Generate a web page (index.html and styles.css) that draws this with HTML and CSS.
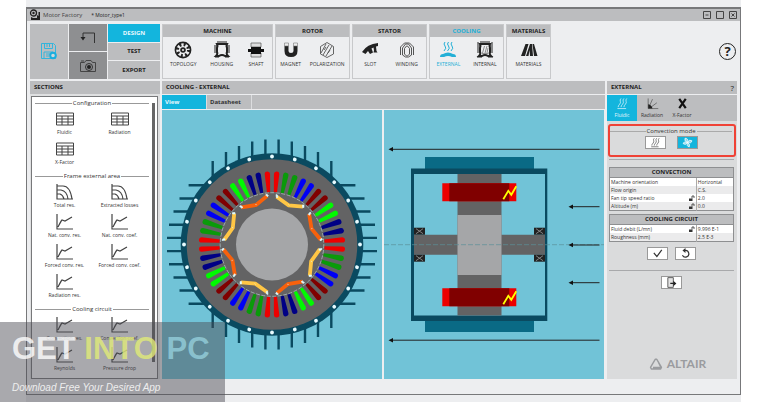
FILE: index.html
```
<!DOCTYPE html>
<html lang="en">
<head>
<meta charset="utf-8">
<title>Motor Factory</title>
<link rel="stylesheet" href="styles.css">
</head>
<body>
<svg class="defs" aria-hidden="true">
  <symbol id="i-table" viewBox="0 0 18 16"><path d="M.5 2h17v12H.5zM.5 5h17M.5 8h17M.5 11h17M6 5v9M12 5v9" fill="none" stroke="#444"/></symbol>
  <symbol id="i-map" viewBox="0 0 18 16"><path d="M1 0v15h16M1 2h6q7 0 9 13M1 6h4q6 1 7 9M1 10h3q3 1 4 5" fill="none" stroke="#444" stroke-width="1.2"/></symbol>
  <symbol id="i-curve" viewBox="0 0 18 16"><path d="M1 0v15h16M2 13q3-6 4-7l3 1 7-4" fill="none" stroke="#444" stroke-width="1.2"/></symbol>
  <symbol id="i-heat" viewBox="0 0 18 18"><path d="M7 2q-2 2-1 4t-1 4-2 4M11 2q-2 2-1 4t-1 4-2 4M15 2q-2 2-1 4t-1 4-2 4M2 16h12" fill="none" stroke="currentColor"/></symbol>
  <symbol id="i-lock" viewBox="0 0 6 6"><path d="M0 3.500h3.500V6H0z" fill="#333"/><path d="M3 3.500V1h2v2" fill="none" stroke="#333" stroke-width=".8"/></symbol>
</svg>

<div class="sheet">
<div class="window">
  <header class="titlebar">
    <svg class="app-icon" viewBox="0 0 12 12"><circle cx="4.500" cy="4" r="3" fill="none" stroke="#222" stroke-width="1.300"/><circle cx="4.500" cy="4" r="1.200" fill="#222"/><path d="M2 8v3h9V3H9.500v4L8 6v3H4z" fill="#222"/></svg>
    <span class="app-name">Motor Factory</span>
    <span class="doc-name">* Motor_type1</span>
    <div class="win-buttons">
      <button aria-label="Minimize"><svg viewBox="0 0 8 8"><path d="M.5.5h7v7h-7zM2.500 4h3" fill="none" stroke="#444"/></svg></button>
      <button aria-label="Maximize"><svg viewBox="0 0 8 8"><path d="M.5.5h7v7h-7z" fill="none" stroke="#444"/></svg></button>
      <button aria-label="Close"><svg viewBox="0 0 8 8"><path d="M.5.5h7v7h-7zM2.500 2.500l3 3M5.500 2.500l-3 3" fill="none" stroke="#444"/></svg></button>
    </div>
  </header>

  <div class="toolbar">
    <button class="save" aria-label="Save"><svg viewBox="0 0 16 17"><path d="M.5.500h12l2 2v13H.500zM3.500.500v5h8v-5M6 1v3M8.500 1v3M3 15V9h9M5 11h5M5 13h3" fill="none" stroke="#35b5dc"/><circle cx="12" cy="12.500" r="2.800" fill="#cfd8dc" stroke="#1aaede" stroke-width="2"/></svg></button>
    <div class="side-tools">
      <button aria-label="Back"><svg viewBox="0 0 16 14"><path d="M14.500 12V2H3v6" fill="none" stroke="#333"/><path d="M.500 6h5L3 9.500z" fill="#222"/></svg></button>
      <button aria-label="Capture"><svg viewBox="0 0 16 14"><path d="M.500 3.500h4l1.500-2h5l1.500 2h3v9H.500zM1 2h3" fill="none" stroke="#444"/><circle cx="9" cy="8" r="3.500" fill="none" stroke="#333"/><circle cx="9" cy="8" r="2" fill="#222"/></svg></button>
    </div>
    <div class="modes">
      <button class="active">DESIGN</button>
      <button>TEST</button>
      <button>EXPORT</button>
    </div>
    <section class="group wide">
      <h2>MACHINE</h2>
      <div class="tools">
        <button><svg viewBox="0 0 18 18"><circle cx="9" cy="9" r="7.600" fill="none" stroke="#222" stroke-width="1.600"/><circle cx="9" cy="9" r="5.600" fill="none" stroke="#222" stroke-width="3.200" stroke-dasharray="2 2.398"/><circle cx="9" cy="9" r="2.800" fill="#222"/><circle cx="9" cy="9" r="1" fill="#eee"/></svg>TOPOLOGY</button>
        <button><svg viewBox="0 0 18 18"><path d="M4 3h10q-1 2 0 4v4q-1 2 1 4h-3q-3-2-6 0H3q2-2 1-4V7q1-2 0-4z" fill="none" stroke="#222" stroke-width="2"/><path d="M5 0v2M7 0v2M9 0v2M11 0v2M13 0v2M1 5h3M1 7h3M1 9h3M1 11h3M14 5h3M14 7h3M14 9h3M14 11h3M2 16h4M12 16h4" stroke="#222"/></svg>HOUSING</button>
        <button><svg viewBox="0 0 18 18"><path d="M4 2h10v4H4zM4 12h10v4H4z" fill="#ddd" stroke="#555" stroke-width=".7"/><path d="M4 6h10v2h3v3h-3v2H4v-2H1V8h3z" fill="#111"/></svg>SHAFT</button>
      </div>
    </section>
    <section class="group">
      <h2>ROTOR</h2>
      <div class="tools">
        <button><svg viewBox="0 0 18 18"><path d="M4.500 5v5q0 4 4.500 4t4.500-4V5" fill="none" stroke="#222" stroke-width="4"/><path d="M2.500 2h4v3h-4zM11.500 2h4v3h-4z" fill="#eee" stroke="#777" stroke-width=".6"/></svg>MAGNET</button>
        <button><svg viewBox="0 0 18 18"><path d="M9 1.500l6.500 4v7.500L9 16.500 2.500 13V5.500zM3 12l5-9M5 14l6-10M8 15l6-10M6 9l2-3M10 12l2-3" fill="none" stroke="#555" stroke-width=".9"/></svg>POLARIZATION</button>
      </div>
    </section>
    <section class="group">
      <h2>STATOR</h2>
      <div class="tools">
        <button><svg viewBox="0 0 18 18"><path d="M1 11Q6 3 17 2v3l-2 .500.500 4.500 1 1.500h-4l.500-2-.500-3-2 1 1.500 4-3 1.500L7 10l-2.500 3z" fill="#222"/></svg>SLOT</button>
        <button><svg viewBox="0 0 18 18"><path d="M2.500 14V6l4-4h5l4 4v8M4.500 14V7l3-4h3l3 4v7l-3 2h-3zM6.500 13V7.500L8.500 5h1l2 2.500V13l-2 2h-1z" fill="none" stroke="#444" stroke-width=".9"/></svg>WINDING</button>
      </div>
    </section>
    <section class="group cooling">
      <h2>COOLING</h2>
      <div class="tools">
        <button class="on"><svg viewBox="0 0 18 18"><path d="M6 1q-2 2 0 4t-1 5M9.500 1q-2 2 0 4t-1 5M13 1q-2 2 0 4t-1 5" fill="none" stroke="currentColor"/><path d="M1 16q0-3 3-3 5-3 10 0 3 0 3 3h-4q-4-2-8 0z" fill="currentColor"/></svg>EXTERNAL</button>
        <button><svg viewBox="0 0 18 18"><path d="M4 3h10q-1 2 0 4v4q-1 2 1 4h-3q-3-2-6 0H3q2-2 1-4V7q1-2 0-4z" fill="none" stroke="#222" stroke-width="2"/><path d="M2 1v3M5 0v2M7 0v2M9 0v2M11 0v2M13 0v2M16 1v3M1 5h3M1 7h3M1 9h3M1 11h3M14 5h3M14 7h3M14 9h3M14 11h3M1 16h5M12 16h5" stroke="#222"/><path d="M6.500 12l2-7M9 12l2-7M11 12l1-5M6 12.500h6" fill="none" stroke="#777" stroke-width=".8"/></svg>INTERNAL</button>
      </div>
    </section>
    <section class="group narrow">
      <h2>MATERIALS</h2>
      <div class="tools">
        <button><svg viewBox="0 0 18 18"><path d="M1 15L5.500 3h3L5 15zM6 15L10 3h2l1 12h-3l-.500-6L8.500 15zM12.500 3H14l3.500 12H14z" fill="#222"/></svg>MATERIALS</button>
      </div>
    </section>
    <button class="help" aria-label="Help">?</button>
  </div>

  <main class="columns">
    <aside class="sections">
      <h1>SECTIONS</h1>
      <div class="list">
        <div class="items">
          <h3>Configuration</h3>
          <div class="grid">
            <button><svg><use href="#i-table"/></svg>Fluidic</button>
            <button><svg><use href="#i-table"/></svg>Radiation</button>
            <button><svg><use href="#i-table"/></svg>X-Factor</button>
          </div>
          <h3>Frame external area</h3>
          <div class="grid">
            <button><svg><use href="#i-map"/></svg>Total res.</button>
            <button><svg><use href="#i-map"/></svg>Extracted losses</button>
            <button><svg><use href="#i-curve"/></svg>Nat. conv. res.</button>
            <button><svg><use href="#i-curve"/></svg>Nat. conv. coef.</button>
            <button><svg><use href="#i-curve"/></svg>Forced conv. res.</button>
            <button><svg><use href="#i-curve"/></svg>Forced conv. coef.</button>
            <button><svg><use href="#i-curve"/></svg>Radiation res.</button>
          </div>
          <h3>Cooling circuit</h3>
          <div class="grid">
            <button><svg><use href="#i-curve"/></svg>Convection res.</button>
            <button><svg><use href="#i-curve"/></svg>Convection coef.</button>
            <button><svg><use href="#i-curve"/></svg>Reynolds</button>
            <button><svg><use href="#i-curve"/></svg>Pressure drop</button>
          </div>
        </div>
        <div class="scroll"><i></i></div>
      </div>
    </aside>

    <section class="center">
      <h1>COOLING - EXTERNAL</h1>
      <nav class="tabs"><button class="active">View</button><button>Datasheet</button></nav>
      <div class="views">
        <svg viewBox="162 110 220 269" role="img" aria-label="Radial view">
          <defs>
            <path id="slot" d="M-1.600-52.500L-2.700-70.500a2.700 2.700 0 0 1 5.400 0L1.600-52.500z"/>
            <g id="dots" fill="#e8fbff"><circle cy="-88" r="1.900"/><circle cy="-88" r="1.900" transform="rotate(15)"/><circle cy="-88" r="1.900" transform="rotate(30)"/><circle cy="-88" r="1.900" transform="rotate(45)"/><circle cy="-88" r="1.900" transform="rotate(60)"/><circle cy="-88" r="1.900" transform="rotate(75)"/></g>
            <path id="fins" d="M-59.300-83.400v18M-46-92.500v18M-33-98.500v18M-19.800-103v18M-6.600-105v18M6.600-105v18M19.800-103v18M33-98.500v18M46-92.500v18M59.300-83.400v18" stroke="#0a4a60" stroke-width="2.400"/>
            <g id="magnet"><path d="M4.700-47.800L16.700-39.200 31-37.800" fill="none" stroke-width="3.800"/><path d="M4-50l1.500.500.300 2.500-1.500 0zM30.500-39.500l1.500 0 0 2.500-1.500 0zM16.500-40l.800 1" fill="#dffcff" stroke="#dffcff" stroke-width=".6"/></g>
            <g id="quadrant">
              <use href="#slot" fill="#ed0000" transform="rotate(-3.750)"/><use href="#slot" fill="#ed0000" transform="rotate(3.750)"/>
              <use href="#slot" fill="#0a9a0a" transform="rotate(11.250)"/><use href="#slot" fill="#0a9a0a" transform="rotate(18.750)"/>
              <use href="#slot" fill="#0000f5" transform="rotate(26.250)"/><use href="#slot" fill="#0000f5" transform="rotate(33.750)"/>
              <use href="#slot" fill="#800000" transform="rotate(41.250)"/><use href="#slot" fill="#800000" transform="rotate(48.750)"/>
              <use href="#slot" fill="#00fa00" transform="rotate(56.250)"/><use href="#slot" fill="#00fa00" transform="rotate(63.750)"/>
              <use href="#slot" fill="#000085" transform="rotate(71.250)"/><use href="#slot" fill="#000085" transform="rotate(78.750)"/>
              <use href="#magnet" stroke="#ffc645"/><use href="#magnet" stroke="#f7610c" transform="rotate(45)"/>
              <use href="#dots"/>
            </g>
          </defs>
          <g transform="translate(272 244.500)">
            <use href="#fins"/><use href="#fins" transform="rotate(90)"/><use href="#fins" transform="rotate(180)"/><use href="#fins" transform="rotate(270)"/>
            <circle r="91.300" fill="#0a4a60"/>
            <circle r="85.300" fill="#636364"/>
            <circle r="51.800" fill="none" stroke="#b5c8cc" stroke-width=".7" stroke-dasharray="4 1.500"/>
            <circle r="36" fill="#a5a6a8"/>
            <use href="#quadrant"/><use href="#quadrant" transform="rotate(90)"/><use href="#quadrant" transform="rotate(180)"/><use href="#quadrant" transform="rotate(270)"/>
          </g>
        </svg>
        <svg viewBox="384 110 220 269" role="img" aria-label="Axial view">
          <defs>
            <g id="bearing"><path d="M0 0h11v7H0z" fill="#222"/><path d="M2 1l7 5M9 1L2 6" stroke="#999" stroke-width=".8"/></g>
            <g id="coil"><path d="M0 0h74v18H0z" fill="#ed0000"/><path d="M7 0h60v18H7z" fill="#800000"/><path d="M61 16l5-8.500 3 4L74 3" fill="none" stroke="#ff0" stroke-width="1.800"/></g>
            <path id="head" d="M0 0l4.500-2.200v4.400z" fill="#111"/>
          </defs>
          <path d="M425 157h109v12H425zM425 320h109v12H425z" fill="#0a6a85"/>
          <path d="M411 168.500h136.300V321H411z" fill="#0a4a60"/>
          <path d="M414 174h131v141.500H414z" fill="#71c3d7"/>
          <path d="M457.500 174h44v141.500h-44zM414 234.700h131v20H414z" fill="#636364"/>
          <path d="M457.500 215h44v60h-44z" fill="#a5a6a8"/>
          <use href="#coil" x="442.300" y="183.300"/><use href="#coil" x="442.300" y="288.300"/>
          <use href="#bearing" x="414" y="227.700"/><use href="#bearing" x="534" y="227.700"/><use href="#bearing" x="414" y="254.700"/><use href="#bearing" x="534" y="254.700"/>
          <path d="M384 244.700h220" stroke="#5a8f9a" stroke-width=".7" stroke-dasharray="5 2"/>
          <path d="M391 149.300h208.500M391 340.200h208.500M571 206.700h28.500M571 245h28.500M571 282.700h28.500" stroke="#222"/>
          <use href="#head" x="388.500" y="149.300"/><use href="#head" x="388.500" y="340.200"/><use href="#head" x="568.500" y="206.700"/><use href="#head" x="568.500" y="245"/><use href="#head" x="568.500" y="282.700"/>
        </svg>
      </div>
    </section>

    <aside class="props">
      <h1>EXTERNAL<button aria-label="Panel help">?</button></h1>
      <nav class="prop-tabs">
        <button class="active"><svg><use href="#i-heat"/></svg>Fluidic</button>
        <button><svg viewBox="0 0 18 18"><path d="M3 2v14h14M5 12l4-9M7 14l8-6" fill="none" stroke="#555"/><path d="M3 10q5 1 6 6H3z" fill="#222"/></svg>Radiation</button>
        <button><svg viewBox="0 0 18 18"><path d="M4.500 2.500l9 13M13.500 2.500l-9 13" stroke="#111" stroke-width="3"/></svg>X-Factor</button>
      </nav>
      <div class="panel">
        <fieldset class="mode">
          <legend>Convection mode</legend>
          <button class="box" aria-label="Natural"><svg><use href="#i-heat"/></svg></button>
          <button class="box on" aria-label="Forced"><svg viewBox="0 0 18 18"><path d="M9 9Q3 7 5 2q6 0 4 7zM9 9q3-6 7-3 0 5-7 3zM9 9q5 3 3 7-5 0-3-7zM9 9q-3 5-7 2 0-4 7-2z" fill="#8fdcf0" stroke="#fff" stroke-width="1.200"/></svg></button>
        </fieldset>
        <hr>
        <table class="first">
          <colgroup><col class="name"><col></colgroup>
          <thead><tr><th colspan="2">CONVECTION</th></tr></thead>
          <tbody>
            <tr><td>Machine orientation</td><td>Horizontal</td></tr>
            <tr><td>Flow origin</td><td>C.S.</td></tr>
            <tr><td>Fan tip speed ratio<svg><use href="#i-lock"/></svg></td><td>2.0</td></tr>
            <tr><td>Altitude (m)<svg><use href="#i-lock"/></svg></td><td>0.0</td></tr>
          </tbody>
        </table>
        <table>
          <colgroup><col class="name"><col></colgroup>
          <thead><tr><th colspan="2">COOLING CIRCUIT</th></tr></thead>
          <tbody>
            <tr><td>Fluid debit (L/mn)<svg><use href="#i-lock"/></svg></td><td>9.996 E-1</td></tr>
            <tr><td>Roughness (mm)</td><td>2.5 E-3</td></tr>
          </tbody>
        </table>
        <div class="actions">
          <button class="box" aria-label="Apply"><svg viewBox="0 0 18 18"><path d="M3 8l5 6 8-11" fill="none" stroke="#333" stroke-width="2"/></svg></button>
          <button class="box" aria-label="Reset"><svg viewBox="0 0 18 18"><path d="M4 12a5.500 5.500 0 1 0 4-8" fill="none" stroke="#333" stroke-width="2"/><path d="M9 0v8L4 4z" fill="#333"/></svg></button>
        </div>
        <hr>
        <div class="actions exit">
          <button class="box" aria-label="Exit"><svg viewBox="0 0 18 18"><path d="M3 1h9v16H3z" fill="#e4e4e4" stroke="#555" stroke-width="1.500"/><path d="M7 9.500h5V6l5 4.500-5 4.500v-3.500H7z" fill="#222"/></svg></button>
        </div>
        <div class="brand"><svg viewBox="0 0 14 12"><path d="M6.200 1.300h1.600l4.700 8-.800 1.700H2.300l-.800-1.700zM9.500 4.500l2.500 5H4" fill="none" stroke="#9a9c9f" stroke-width="1.400" stroke-linejoin="round"/></svg>ALTAIR</div>
      </div>
    </aside>
  </main>
</div>
</div>

<div class="watermark">
  <p class="wm-title">GET <b>INTO</b> <span>PC</span></p>
  <p class="wm-sub">Download Free Your Desired App</p>
</div>
</body>
</html>
```
FILE: styles.css
```
* { box-sizing: border-box; }
body { margin: 0; background: #fff; font: 6px/8px "Open Sans", "Noto Sans", sans-serif; color: #333; position: relative; }
h1, h2, h3, p { margin: 0; font-size: 6px; font-weight: 700; }
button { font: inherit; color: inherit; background: none; border: 0; padding: 0; margin: 0; }
svg { display: block; flex: none; }
.defs { position: absolute; width: 0; height: 0; }

.sheet { margin: 0 27px 0 26px; padding: 7px 0; background: #edeef0; min-height: 100vh; display: flex; }
.window { flex: 1; min-width: 0; border: 1px solid #77787a; border-top-width: 2px; display: flex; flex-direction: column; background: #edeef0; }

.titlebar { display: flex; align-items: center; height: 12px; padding: 0 3px 0 2px; background: #bcbdbf; }
.app-icon { width: 12px; height: 12px; }
.app-name { margin-left: 2px; color: #444; font-size: 6px; }
.doc-name { margin-left: 9px; font-size: 5px; color: #222; }
.win-buttons { margin-left: auto; display: flex; gap: 5px; }
.win-buttons svg { width: 8px; height: 8px; }

.toolbar { display: flex; gap: 2px; padding: 3px 3px 2px; height: 60px; }
.save { width: 38px; background: #bcbdbf; display: flex; align-items: center; justify-content: center; margin-right: -1px; }
.save svg { width: 16px; height: 17px; }
.side-tools { width: 38px; display: grid; grid-template-rows: 1fr 1fr; gap: 1px; margin-right: -1px; }
.side-tools button { background: #8e8f91; display: flex; align-items: center; justify-content: center; }
.side-tools svg { width: 16px; height: 14px; }
.modes { width: 52px; display: grid; grid-template-rows: repeat(3, 1fr); gap: 1px; }
.modes button { background: #bcbdbf; font-weight: 700; color: #222; }
.modes .active, .tabs .active, .prop-tabs .active, .box.on { background: #13b5dd; color: #e6f8fd; }
.group { width: 75px; border: 1px solid #c8c9cb; display: flex; flex-direction: column; }
.group.wide { width: 111px; }
.group.narrow { width: 45px; }
.group h2 { background: #bcbdbf; line-height: 12px; text-align: center; color: #222; white-space: nowrap; }
.cooling h2, .tools .on { color: #22afd6; }
.tools { display: flex; justify-content: space-around; padding-top: 4px; }
.tools button { display: flex; flex-direction: column; align-items: center; font-size: 5px; line-height: 10px; }
.tools svg { width: 18px; height: 18px; }
.help { margin: auto 1px auto auto; width: 17px; height: 17px; border: 1px solid #222; border-radius: 50%; font-size: 13px; line-height: 15px; font-weight: 700; color: #222; }

.columns { flex: 1; display: flex; gap: 2px; padding: 0 3px 15px; }
h1 { background: #bcbdbf; height: 13px; line-height: 13px; padding: 0 4px; color: #222; }
.sections { width: 130px; display: flex; flex-direction: column; background: #dfe0e1; }
.list { flex: 1; margin: 2px 2px 0 1px; background: #fff; border: 1px solid #77787a; display: flex; padding: 0 1px 0 3px; }
.items { flex: 1; }
.items h3 { display: flex; align-items: center; gap: 1px; line-height: 13px; font-weight: 400; white-space: nowrap; }
.items h3::before, .items h3::after { content: ""; flex: 1; height: 1px; background: #999; }
.grid { display: grid; grid-template-columns: 1fr 1fr; padding: 0 2px; }
.grid button { height: 30px; padding-top: 1px; display: flex; flex-direction: column; align-items: center; font-size: 5px; line-height: 10px; white-space: nowrap; }
.grid svg { width: 18px; height: 16px; }
.scroll { margin-left: 3px; width: 4px; padding: 6px 0 16px; display: flex; }
.scroll i { width: 3px; background: #666; }

.center { flex: 1; min-width: 0; display: flex; flex-direction: column; }
.tabs { display: flex; margin-top: 1px; height: 14px; background: #bcbdbf; }
.tabs button { width: 45px; padding: 0 3px; text-align: left; font-weight: 700; border-right: 1px solid #dcdddf; }
.views { flex: 1; display: grid; grid-template-columns: 1fr 1fr; gap: 2px; padding: 1px 1px 0 0; }
.views svg { width: 100%; height: 100%; background: #71c3d7; }

.props { width: 130px; display: flex; flex-direction: column; }
.props h1 { display: flex; justify-content: space-between; padding-right: 3px; }
.props h1 button { font-size: 8px; font-weight: 400; }
.prop-tabs { margin-top: 1px; display: flex; background: #bcbdbf; height: 26px; }
.prop-tabs button { width: 30px; font-size: 5px; line-height: 8px; display: flex; flex-direction: column; align-items: center; padding-top: 2px; gap: 1px; }
.prop-tabs svg { width: 13px; height: 13px; }
.panel { flex: 1; background: #dadbdc; padding: 3px 3px 8px 2px; display: flex; flex-direction: column; }
.mode { margin: 0 -2px 0 -1px; min-width: 0; height: 33px; border: 2px solid #ef4236; border-radius: 3px; padding: 1px 2px 0 0; display: flex; flex-wrap: wrap; align-content: flex-start; justify-content: center; gap: 1px 11px; }
.mode legend { float: left; width: 100%; padding: 0; display: flex; align-items: center; gap: 1px; line-height: 8px; }
.mode legend::before, .mode legend::after { content: ""; flex: 1; height: 1px; background: #aaa; }
.box { width: 21px; height: 13px; background: #fff; border: 1px solid #999; display: flex; align-items: center; justify-content: center; }
.box svg { width: 11px; height: 11px; }
hr { width: 100%; height: 1px; border: 0; margin: 2px 0 0; background: #a8a9ab; flex: none; }
table { border-collapse: collapse; width: 100%; margin-top: 3px; border: 1px solid #8e8f91; font-size: 5px; line-height: 8px; table-layout: fixed; }
table.first { margin-top: 7px; }
.name { width: 70%; }
th { background: #bcbdbf; font-size: 6px; line-height: 9px; padding: 0; color: #222; border-bottom: 1px solid #8e8f91; }
td { padding: 0 1px; background: #fff; white-space: nowrap; }
tr:nth-child(even) td { background: #ebebec; }
td:last-child { border-left: 1px solid #aaa; }
td svg { float: right; width: 6px; height: 6px; margin-top: 1px; }
.actions { display: flex; justify-content: center; gap: 7px; margin: 5px 0 8px; }
.exit { margin: 5px 0 0; }
.brand { margin-top: auto; display: flex; align-items: center; justify-content: center; gap: 4px; padding-left: 12px; font: 700 12px/14px Lato, sans-serif; color: #9a9c9f; }
.brand svg { width: 14px; height: 12px; }

.watermark { position: absolute; left: 0; bottom: 0; width: 225px; height: 80px; padding: 9px 12px 0; background: rgba(76, 76, 84, .48); font-family: "Liberation Sans", sans-serif; white-space: nowrap; }
.wm-title { font-size: 31px; line-height: 35px; color: rgba(255, 255, 255, .8); }
.wm-title b { color: rgba(226, 236, 120, .8); }
.wm-title span { color: rgba(150, 208, 220, .8); }
.wm-sub { margin-top: 16px; font-size: 10px; line-height: 12px; font-weight: 400; font-style: italic; color: #eee; }
```
